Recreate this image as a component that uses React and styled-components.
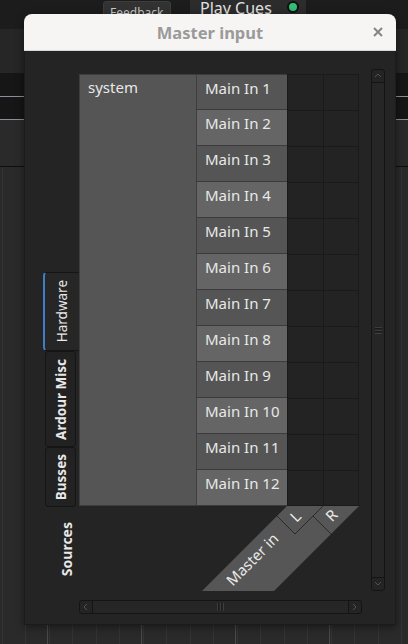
import React from 'react';
import styled, { createGlobalStyle } from 'styled-components';

const GlobalStyle = createGlobalStyle`
  html, body {
    margin: 0;
    padding: 0;
    background: #2a2a2a;
  }
  body {
    width: 408px;
    height: 644px;
    overflow: hidden;
    font-family: "Noto Sans", "DejaVu Sans", sans-serif;
  }
  * {
    box-sizing: border-box;
  }
`;

const PORTS = Array.from({ length: 12 }, (_, i) => `Main In ${i + 1}`);
const TABS = [
  { id: 'hw', label: 'Hardware', height: 79, active: true },
  { id: 'misc', label: 'Ardour Misc', height: 96 },
  { id: 'bus', label: 'Busses', height: 60 },
];

const Chevron = ({ dir }) => {
  const pts = {
    up: '1,5 4,2 7,5',
    down: '1,2 4,5 7,2',
    left: '5,1 2,4 5,7',
    right: '2,1 5,4 2,7',
  }[dir];
  return (
    <svg width="8" height="8" viewBox="0 0 8 8">
      <polyline points={pts} fill="none" stroke="#505050" strokeWidth="1" />
    </svg>
  );
};

const App = () => (
  <S.Screen>
    <GlobalStyle />
    <S.TopBar>
      <S.FeedbackBtn>Feedback</S.FeedbackBtn>
      <S.CueBox>
        <S.CueLabel>Play Cues</S.CueLabel>
        <S.Led />
      </S.CueBox>
    </S.TopBar>
    <S.Lane $h={44} $bg="#262626" />
    <S.Lane $h={24} $bg="#161616" $line="#8a9099" />
    <S.Lane $h={23} $bg="#161616" $line="#8a9099" />
    <S.Lane $h={47} $bg="#2a2a2a" $line="#0e0e0e" />
    <S.Timeline />

    <S.Window>
      <S.Header>
        <span />
        <S.Title>Master input</S.Title>
        <S.CloseBtn>
          <svg width="10" height="10" viewBox="0 0 10 10">
            <path d="M1 1 L9 9 M9 1 L1 9" stroke="#858585" strokeWidth="2" />
          </svg>
        </S.CloseBtn>
      </S.Header>

      <S.Body>
        <S.SideColumn>
          <S.TabStack>
            {TABS.map(tab => (
              <S.Tab key={tab.id} $active={tab.active} $h={tab.height}>
                <S.VerticalText $bold={!tab.active}>{tab.label}</S.VerticalText>
              </S.Tab>
            ))}
          </S.TabStack>
          <S.SourcesArea>
            <S.VerticalText $bold $size={14}>
              Sources
            </S.VerticalText>
          </S.SourcesArea>
        </S.SideColumn>

        <S.MatrixColumn>
          <S.Matrix>
            <S.SystemCell>system</S.SystemCell>
            {PORTS.map((port, i) => (
              <React.Fragment key={port}>
                <S.PortCell $alt={i % 2 === 1} $first={i === 0}>
                  {port}
                </S.PortCell>
                <S.GridCell $first={i === 0} $last={i === PORTS.length - 1} />
                <S.GridCell $first={i === 0} $last={i === PORTS.length - 1} $right />
              </React.Fragment>
            ))}
          </S.Matrix>
          <S.ColumnLabels width="280" height="85" viewBox="0 0 280 85">
            <polygon points="208,0 280,0 195,85 123,85" fill="#565656" />
            <path
              d="M198 10 L216 28 L244 0 M234 10 L252 28"
              stroke="#2a2a2a"
              strokeWidth="1"
              fill="none"
            />
            <S.LabelText x="216" y="10" transform="rotate(-45 216 10)">
              L
            </S.LabelText>
            <S.LabelText x="252" y="9" transform="rotate(-45 252 9)">
              R
            </S.LabelText>
            <S.LabelText x="173" y="53" transform="rotate(-45 173 53)">
              Master in
            </S.LabelText>
          </S.ColumnLabels>
        </S.MatrixColumn>

        <S.VScroll>
          <S.ScrollBtn $dir="up">
            <Chevron dir="up" />
          </S.ScrollBtn>
          <S.VThumb>
            <S.Grip $vertical />
          </S.VThumb>
          <S.ScrollBtn $dir="down">
            <Chevron dir="down" />
          </S.ScrollBtn>
        </S.VScroll>

        <S.HScroll>
          <S.ScrollBtn $dir="left">
            <Chevron dir="left" />
          </S.ScrollBtn>
          <S.HThumb>
            <S.Grip />
          </S.HThumb>
          <S.ScrollBtn $dir="right">
            <Chevron dir="right" />
          </S.ScrollBtn>
        </S.HScroll>
      </S.Body>
    </S.Window>
  </S.Screen>
);

export default App;

const S = {
  Screen: styled.div`
    position: relative;
    width: 408px;
    height: 644px;
    display: flex;
    flex-direction: column;
    background: #2a2a2a;
    overflow: hidden;
  `,

  TopBar: styled.div`
    display: flex;
    align-items: flex-start;
    height: 29px;
    padding-top: 1px;
    background: #1c1c1c;
  `,

  FeedbackBtn: styled.div`
    width: 68px;
    height: 26px;
    margin-left: 103px;
    padding: 3px 0 0 6px;
    border: 1px solid #3c3c3c;
    border-radius: 3px;
    background: #323232;
    color: #c8c8c8;
    font-size: 12px;
    line-height: 16px;
  `,

  CueBox: styled.div`
    display: flex;
    align-items: flex-start;
    width: 116px;
    height: 27px;
    margin-left: 19px;
    margin-top: -1px;
    padding: 0 7px 0 10px;
    background: #2c2c2c;
  `,

  CueLabel: styled.span`
    margin-top: 0;
    color: #e2e2e2;
    font-size: 16px;
    line-height: 16px;
  `,

  Led: styled.span`
    width: 12px;
    height: 12px;
    margin: 1px 0 0 auto;
    border: 2px solid #0f0f0f;
    border-radius: 50%;
    background: #2fc178;
  `,

  Lane: styled.div`
    height: ${p => p.$h}px;
    background: ${p => p.$bg};
    border-bottom: ${p => (p.$line ? `1px solid ${p.$line}` : 'none')};
  `,

  Timeline: styled.div`
    flex: 1;
    background-color: #2a2a2a;
    background-image: repeating-linear-gradient(
        to right,
        transparent 0 47px,
        #4a4a4a 47px 48px,
        transparent 48px 94px
      ),
      repeating-linear-gradient(
        to right,
        transparent 0 1.5px,
        #343434 1.5px 2.5px,
        transparent 2.5px 23.5px
      );
  `,

  Window: styled.div`
    position: absolute;
    top: 14px;
    left: 24px;
    width: 372px;
    height: 611px;
    display: flex;
    flex-direction: column;
    border-radius: 8px 8px 0 0;
    box-shadow: 0 2px 8px rgba(0, 0, 0, 0.45);
  `,

  Header: styled.div`
    display: grid;
    grid-template-columns: 36px 1fr 36px;
    align-items: center;
    height: 37px;
    border-bottom: 1px solid #d9d8d6;
    border-radius: 8px 8px 0 0;
    background: #f6f5f4;
  `,

  Title: styled.span`
    color: #9a9a9a;
    font-size: 16.5px;
    font-weight: 700;
    text-align: center;
  `,

  CloseBtn: styled.span`
    display: flex;
    align-items: center;
    justify-content: center;
    padding-bottom: 1px;
  `,

  Body: styled.div`
    flex: 1;
    display: grid;
    grid-template-columns: 36px 283px 9px 14px;
    grid-template-rows: 522px 9px 14px;
    padding: 18px 10px 0 18px;
    border: 1px solid #1b1b1b;
    border-top: none;
    background: #242424;
  `,

  SideColumn: styled.div`
    grid-column: 1;
    grid-row: 1;
    display: flex;
    flex-direction: column;
    justify-content: flex-end;
  `,

  TabStack: styled.div`
    display: flex;
    flex-direction: column;
  `,

  Tab: styled.div`
    display: flex;
    align-items: center;
    justify-content: center;
    height: ${p => p.$h}px;
    width: ${p => (p.$active ? 36 : 31)}px;
    margin-left: ${p => (p.$active ? 0 : 2)}px;
    border: 1px solid #151515;
    border-left: ${p => (p.$active ? '2px solid #3f7dc9' : '1px solid #151515')};
    border-right: ${p => (p.$active ? 'none' : '1px solid #151515')};
    border-radius: ${p => (p.$active ? '4px 0 0 4px' : '3px')};
    background: ${p => (p.$active ? '#262626' : '#222222')};
  `,

  VerticalText: styled.span`
    writing-mode: vertical-rl;
    transform: rotate(180deg);
    color: #e8e8e8;
    font-size: ${p => p.$size || 13.5}px;
    font-weight: ${p => (p.$bold ? 700 : 400)};
    white-space: nowrap;
  `,

  SourcesArea: styled.div`
    display: flex;
    align-items: center;
    justify-content: center;
    height: 84px;
    padding-left: 10px;
  `,

  MatrixColumn: styled.div`
    grid-column: 2;
    grid-row: 1;
    display: flex;
    flex-direction: column;
    padding-top: 5px;
  `,

  Matrix: styled.div`
    display: grid;
    grid-template-columns: 118px 90px 36px 36px;
    grid-template-rows: repeat(12, 36px);
    width: 280px;
  `,

  SystemCell: styled.div`
    grid-column: 1;
    grid-row: 1 / span 12;
    padding: 2px 8px;
    border: 1px solid #3d3d3d;
    background: #555555;
    color: #e8e8e8;
    font-size: 15px;
  `,

  PortCell: styled.div`
    grid-column: 2;
    padding: 3px 0 0 8px;
    border-top: ${p => (p.$first ? '1px solid #3b3b3b' : 'none')};
    border-bottom: 1px solid #3b3b3b;
    background: ${p => (p.$alt ? '#656565' : '#555555')};
    color: #e8e8e8;
    font-size: 15px;
    white-space: nowrap;
  `,

  GridCell: styled.div`
    border-left: 1px solid #1a1a1a;
    border-top: 1px solid #1a1a1a;
    border-right: ${p => (p.$right ? '1px solid #1a1a1a' : 'none')};
    border-bottom: ${p => (p.$last ? '1px solid #1a1a1a' : 'none')};
    background: #232323;
  `,

  ColumnLabels: styled.svg`
    display: block;
  `,

  LabelText: styled.text`
    fill: #e8e8e8;
    font-family: "Noto Sans", "DejaVu Sans", sans-serif;
    font-size: 15px;
    text-anchor: middle;
    dominant-baseline: central;
  `,

  VScroll: styled.div`
    grid-column: 4;
    grid-row: 1;
    display: flex;
    flex-direction: column;
    border: 1px solid #141414;
    border-radius: 3px;
    background: #242424;
  `,

  HScroll: styled.div`
    grid-column: 2;
    grid-row: 3;
    display: flex;
    border: 1px solid #141414;
    border-radius: 3px;
    background: #242424;
  `,

  ScrollBtn: styled.div`
    display: flex;
    align-items: center;
    justify-content: center;
    flex: 0 0 13px;
    border-color: #141414;
    border-style: solid;
    border-width: ${p =>
      ({ up: '0 0 1px 0', down: '1px 0 0 0', left: '0 1px 0 0', right: '0 0 0 1px' })[p.$dir]};
  `,

  VThumb: styled.div`
    flex: 1;
    display: flex;
    align-items: center;
    justify-content: center;
    background: #262626;
  `,

  HThumb: styled.div`
    flex: 1;
    display: flex;
    align-items: center;
    justify-content: center;
    background: #262626;
  `,

  Grip: styled.span`
    width: 7px;
    height: ${p => (p.$vertical ? 7 : 8)}px;
    background-image: repeating-linear-gradient(
      ${p => (p.$vertical ? 'to bottom' : 'to right')},
      #3c3c3c 0 1px,
      #1a1a1a 1px 2px,
      transparent 2px 3px
    );
  `,
};
